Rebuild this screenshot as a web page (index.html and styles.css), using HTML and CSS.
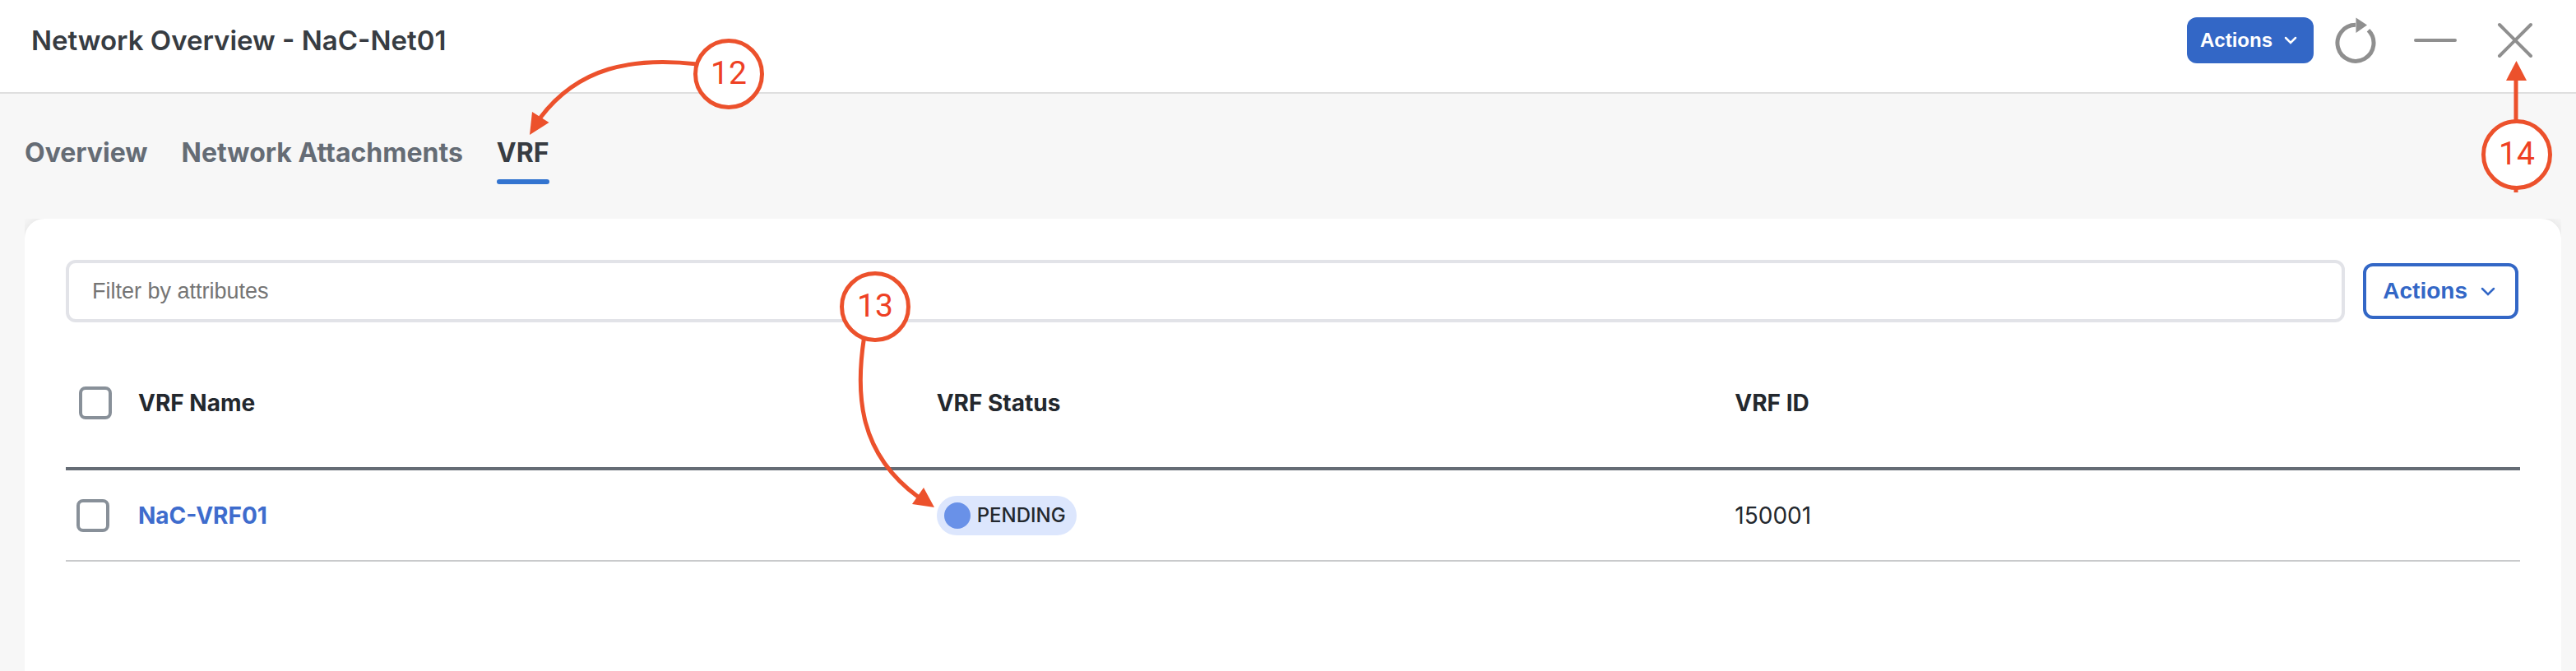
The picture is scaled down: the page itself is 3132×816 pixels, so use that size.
FILE: index.html
```html
<!DOCTYPE html>
<html lang="en">
<head>
    <meta charset="UTF-8">
    <meta name="viewport" content="width=device-width, initial-scale=1.0">
    <title>Network Overview - NaC-Net01</title>
    <link rel="stylesheet" href="styles.css">
</head>
<body>
<header class="topbar">
    <h1>Network Overview - NaC-Net01</h1>
    <div class="topbar-right">
        <button type="button" class="btn btn-primary">
            Actions
            <svg class="chevron" viewBox="0 0 16 10" width="16" height="10"><path d="M2 2l6 6 6-6"/></svg>
        </button>
        <div class="window-icons">
            <button type="button" class="icon-btn" aria-label="Refresh">
                <svg viewBox="0 0 56 56" width="56" height="56">
                    <path d="M28 9.300A22 22 0 1 0 43.500 15.700" class="icon-line refresh-line"/>
                    <path d="M28.500 0.500L42 9.500L28.500 19z" class="icon-fill"/>
                </svg>
            </button>
            <button type="button" class="icon-btn" aria-label="Minimize">
                <svg viewBox="0 0 56 56" width="56" height="56"><path d="M4 28H52" class="icon-line"/></svg>
            </button>
            <button type="button" class="icon-btn" aria-label="Close">
                <svg viewBox="0 0 56 56" width="56" height="56"><path d="M9 9L47 47M47 9L9 47" class="icon-line"/></svg>
            </button>
            <svg class="callout callout-14" viewBox="3010 70 100 166" width="100" height="166">
                <path d="M3059 96V234" class="callout-line"/>
                <path d="M3059.500 74L3072 98H3047z" class="callout-head"/>
                <circle cx="3060" cy="188" r="40.500" class="callout-circle"/>
                <text x="3060" y="200" class="callout-text">14</text>
            </svg>
        </div>
    </div>
</header>

<main class="content">
    <nav class="tabs">
        <a href="#overview" class="tab">Overview</a>
        <a href="#attachments" class="tab">Network Attachments</a>
        <a href="#vrf" class="tab active">VRF
            <svg class="callout callout-12" viewBox="640 40 300 130" width="300" height="130">
                <path d="M848 78C768 69 703 82 657 143" class="callout-line"/>
                <path d="M644 164L647 136L667.500 149z" class="callout-head"/>
                <circle cx="886" cy="90" r="40.500" class="callout-circle"/>
                <text x="886" y="102" class="callout-text">12</text>
            </svg>
        </a>
    </nav>

    <div class="card-wrap">
        <section class="card">
            <div class="toolbar">
                <input type="text" class="filter" placeholder="Filter by attributes" aria-label="Filter by attributes">
                <button type="button" class="btn btn-outline">
                    Actions
                    <svg class="chevron" viewBox="0 0 18 12" width="18" height="12"><path d="M2 3l7 7 7-7"/></svg>
                </button>
            </div>

            <table class="vrf-table">
                <thead>
                    <tr>
                        <th class="check-col"><input type="checkbox" aria-label="Select all"></th>
                        <th>VRF Name</th>
                        <th>VRF Status</th>
                        <th>VRF ID</th>
                    </tr>
                </thead>
                <tbody>
                    <tr>
                        <td class="check-col"><input type="checkbox" aria-label="Select NaC-VRF01"></td>
                        <td><a href="#nac-vrf01" class="vrf-link">NaC-VRF01</a></td>
                        <td>
                            <span class="badge"><span class="dot"></span>PENDING
                                <svg class="callout callout-13" viewBox="1010 320 140 310" width="140" height="310">
                                    <path d="M1050.500 411C1040 480 1044 551 1116 604" class="callout-line"/>
                                    <path d="M1136 617L1109 613L1123 593z" class="callout-head"/>
                                    <circle cx="1064" cy="373" r="40.500" class="callout-circle"/>
                                    <text x="1064" y="385" class="callout-text">13</text>
                                </svg>
                            </span>
                        </td>
                        <td>150001</td>
                    </tr>
                </tbody>
            </table>
        </section>
    </div>
</main>
</body>
</html>
```
FILE: styles.css
```css
* {
    box-sizing: border-box;
}

body {
    margin: 0;
    min-height: 100vh;
    display: flex;
    flex-direction: column;
    background: #f7f7f7;
    color: #23282e;
    font-family: Inter, sans-serif;
    font-size: 28px;
}

.topbar {
    display: flex;
    justify-content: space-between;
    align-items: center;
    padding: 21px 46px 35px 38px;
    background: #fff;
    border-bottom: 2px solid #dfdfdf;
}

h1 {
    margin: 0;
    font-size: 33px;
    line-height: 40px;
    font-weight: 600;
    color: #373c42;
}

.topbar-right {
    display: flex;
    align-items: center;
    gap: 23px;
}

.window-icons {
    position: relative;
    display: flex;
    gap: 41px;
}

.btn {
    display: flex;
    align-items: center;
    font-family: "Liberation Sans", Arial, sans-serif;
    font-weight: bold;
    border-radius: 12px;
    cursor: pointer;
}

.btn-primary {
    height: 56px;
    padding: 0 20px 0 16px;
    gap: 14px;
    border: none;
    font-size: 24px;
    background: #3367c6;
    color: #fff;
}

.btn-outline {
    height: 68px;
    padding: 0 24px 0 20px;
    gap: 16px;
    border: 4px solid #3367c6;
    font-size: 28px;
    background: #fff;
    color: #3367c6;
}

.chevron {
    fill: none;
    stroke: currentColor;
    stroke-width: 2.5;
    stroke-linecap: round;
}

.icon-btn {
    display: flex;
    padding: 0;
    border: none;
    background: none;
    cursor: pointer;
}

.icon-line {
    fill: none;
    stroke: #8f8f8f;
    stroke-width: 4;
    stroke-linecap: round;
}

.refresh-line {
    stroke-width: 5;
    stroke-linecap: butt;
}

.icon-fill {
    fill: #8f8f8f;
}

.content {
    flex: 1;
    display: flex;
    flex-direction: column;
    padding: 52px 18px 0 30px;
}

.tabs {
    display: flex;
    gap: 41px;
    margin-bottom: 42px;
}

.tab {
    position: relative;
    padding-bottom: 18px;
    font-size: 32px;
    line-height: 40px;
    font-weight: 700;
    color: #656c75;
    text-decoration: none;
}

.tab.active {
    color: #373c42;
}

.tab.active::after {
    content: "";
    position: absolute;
    left: 0;
    right: 0;
    bottom: 0;
    height: 6px;
    border-radius: 3px;
    background: #3374d0;
}

/* keeps the card shadow inside the corners */
.card-wrap {
    flex: 1;
    display: flex;
    overflow: hidden;
}

.card {
    flex: 1;
    padding: 50px;
    background: #fff;
    border-radius: 24px 24px 0 0;
    box-shadow: 0 0 16px rgba(0, 0, 0, 0.1);
}

.toolbar {
    display: flex;
    align-items: center;
    gap: 22px;
    padding-right: 2px;
}

.filter {
    flex: 1;
    height: 76px;
    padding: 0 28px;
    border: 4px solid #e2e3e8;
    border-radius: 12px;
    font-family: "Liberation Sans", Arial, sans-serif;
    font-size: 27px;
}

.filter::placeholder {
    color: #757575;
}

.vrf-table {
    width: 100%;
    margin-top: 20px;
    table-layout: fixed;
    border-collapse: separate;
    border-spacing: 0;
}

th,
td {
    padding: 0 16px;
    text-align: left;
    vertical-align: middle;
}

th {
    height: 160px;
    font-weight: 700;
    border-bottom: 4px solid #656c75;
}

td {
    height: 111px;
    border-bottom: 2px solid #c9cacc;
}

.check-col {
    width: 72px;
}

td.check-col {
    padding: 0 13px;
}

input[type="checkbox"] {
    appearance: none;
    display: block;
    width: 40px;
    height: 40px;
    margin: 0;
    border: 4px solid #889099;
    border-radius: 8px;
    background: #fff;
}

input[type="checkbox"]:checked {
    background: #3367c6;
}

.vrf-link {
    font-weight: 700;
    color: #3e6ccd;
    text-decoration: none;
}

.badge {
    position: relative;
    display: inline-flex;
    align-items: center;
    gap: 8px;
    height: 48px;
    padding: 0 13px 0 9px;
    border-radius: 24px;
    background: #dce6fd;
    font-size: 24px;
    font-weight: 500;
    vertical-align: middle;
}

.dot {
    width: 32px;
    height: 32px;
    border-radius: 50%;
    background: #6991e8;
}

/* numbered step markers */
.callout {
    position: absolute;
    z-index: 5;
    pointer-events: none;
}

.callout-12 {
    left: 36px;
    top: -126px;
}

.callout-13 {
    left: -129px;
    top: -283px;
}

.callout-14 {
    right: -24px;
    top: 49px;
}

.callout-line {
    fill: none;
    stroke: #ec512c;
    stroke-width: 5;
}

.callout-head {
    fill: #ec512c;
}

.callout-circle {
    fill: #fff;
    stroke: #ec512c;
    stroke-width: 5;
}

.callout-text {
    fill: #ee4023;
    font-family: Roboto, sans-serif;
    font-size: 39px;
    font-weight: 400;
    text-anchor: middle;
}
```
